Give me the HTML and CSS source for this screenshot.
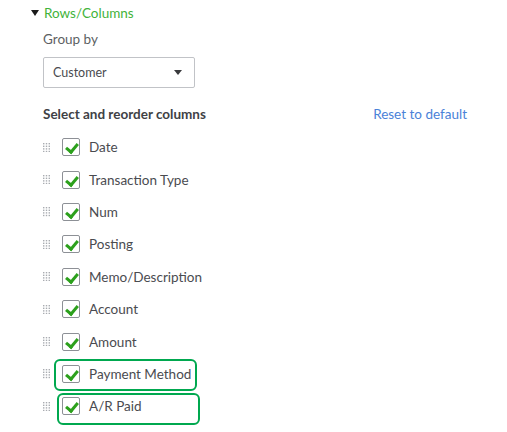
FILE: index.html
```html
<!DOCTYPE html>
<html lang="en">

<head>
    <meta charset="UTF-8">
    <meta name="viewport" content="width=device-width, initial-scale=1.0">
    <title>Rows/Columns</title>
    <link rel="stylesheet" href="styles.css">
</head>

<body>
    <svg class="defs" width="0" height="0">
        <defs>
            <g id="dots" fill="#a9acb1">
                <rect x="0" y="0" width="1.4" height="1.4" /><rect x="2.8" y="0" width="1.4" height="1.4" /><rect x="5.6" y="0" width="1.4" height="1.4" />
                <rect x="0" y="2.6" width="1.4" height="1.4" /><rect x="2.8" y="2.6" width="1.4" height="1.4" /><rect x="5.6" y="2.6" width="1.4" height="1.4" />
                <rect x="0" y="5.2" width="1.4" height="1.4" /><rect x="2.8" y="5.2" width="1.4" height="1.4" /><rect x="5.6" y="5.2" width="1.4" height="1.4" />
                <rect x="0" y="7.8" width="1.4" height="1.4" /><rect x="2.8" y="7.8" width="1.4" height="1.4" /><rect x="5.6" y="7.8" width="1.4" height="1.4" />
            </g>
        </defs>
    </svg>

    <div class="panel">
        <div class="section-title">
            <span class="caret"></span>
            <a href="javascript:">Rows/Columns</a>
        </div>

        <div class="section-body">
            <div class="field-label">Group by</div>
            <div class="select-box">
                <span>Customer</span>
                <span class="select-arrow"></span>
            </div>

            <div class="columns-head">
                <span class="columns-title">Select and reorder columns</span>
                <a href="javascript:" class="reset-link">Reset to default</a>
            </div>

            <ul class="column-list">
                <li class="column-row"><svg class="grip" viewBox="0 0 7 9.2"><use href="#dots" /></svg><span class="check"></span><span class="name">Date</span></li>
                <li class="column-row"><svg class="grip" viewBox="0 0 7 9.2"><use href="#dots" /></svg><span class="check"></span><span class="name">Transaction Type</span></li>
                <li class="column-row"><svg class="grip" viewBox="0 0 7 9.2"><use href="#dots" /></svg><span class="check"></span><span class="name">Num</span></li>
                <li class="column-row"><svg class="grip" viewBox="0 0 7 9.2"><use href="#dots" /></svg><span class="check"></span><span class="name">Posting</span></li>
                <li class="column-row"><svg class="grip" viewBox="0 0 7 9.2"><use href="#dots" /></svg><span class="check"></span><span class="name">Memo/Description</span></li>
                <li class="column-row"><svg class="grip" viewBox="0 0 7 9.2"><use href="#dots" /></svg><span class="check"></span><span class="name">Account</span></li>
                <li class="column-row"><svg class="grip" viewBox="0 0 7 9.2"><use href="#dots" /></svg><span class="check"></span><span class="name">Amount</span></li>
                <li class="column-row"><svg class="grip" viewBox="0 0 7 9.2"><use href="#dots" /></svg><span class="check"></span><span class="name">Payment Method</span>
                    <span class="mark mark-one"></span></li>
                <li class="column-row"><svg class="grip" viewBox="0 0 7 9.2"><use href="#dots" /></svg><span class="check"></span><span class="name">A/R Paid</span>
                    <span class="mark mark-two"></span></li>
            </ul>
        </div>
    </div>
</body>

</html>
```

FILE: styles.css
```css
* {
    padding: 0;
    margin: 0;
    box-sizing: border-box;
}

body {
    background: #ffffff;
    font-family: Lato, "Open Sans", sans-serif;
    font-size: 13px;
    color: #4a4b50;
}

a {
    text-decoration: none;
}

.defs {
    position: absolute;
}

.panel {
    padding: 5px 0 10px 31px;
}

.section-title {
    display: flex;
    align-items: center;
    height: 15px;
    font-size: 13.5px;
}

.section-title a {
    color: #3fb33a;
}

.caret {
    width: 0;
    height: 0;
    border-left: 4px solid transparent;
    border-right: 4px solid transparent;
    border-top: 6px solid #1b1b1b;
    margin-right: 5px;
}

.section-body {
    padding-left: 12px;
}

.field-label {
    margin-top: 10px;
    font-size: 13.5px;
    color: #5d5f63;
    line-height: 18px;
}

.select-box {
    display: flex;
    align-items: center;
    justify-content: space-between;
    width: 152px;
    height: 31px;
    margin-top: 9px;
    padding: 0 12px 0 9px;
    border: 1px solid #c1c3c7;
    border-radius: 2px;
    font-size: 12.5px;
    color: #4a4b50;
}

.select-arrow {
    width: 0;
    height: 0;
    border-left: 4px solid transparent;
    border-right: 4px solid transparent;
    border-top: 5px solid #393a3d;
}

.columns-head {
    display: flex;
    justify-content: space-between;
    align-items: center;
    width: 424px;
    margin-top: 18px;
    height: 16px;
}

.columns-title {
    font-weight: bold;
    font-size: 13.5px;
    color: #404145;
}

.reset-link {
    color: #4a82d8;
    font-size: 13.5px;
}

.column-list {
    list-style: none;
    margin-top: 9px;
}

.column-row {
    position: relative;
    display: flex;
    align-items: center;
    height: 32.4px;
}

.grip {
    width: 7px;
    height: 9.2px;
    margin-right: 12px;
}

.check {
    position: relative;
    width: 18px;
    height: 18px;
    border: 1px solid #8d9096;
    border-radius: 2px;
    margin-right: 9px;
}

.check::after {
    content: "";
    position: absolute;
    left: 5px;
    top: 2px;
    width: 5px;
    height: 9px;
    border-right: 3px solid #2ca01c;
    border-bottom: 3px solid #2ca01c;
    transform: rotate(40deg);
}

.name {
    font-size: 13.5px;
    color: #4a4b50;
}

/* 标注框 */
.mark {
    position: absolute;
    border: 2.5px solid #00a84f;
    border-radius: 6px;
}

.mark-one {
    left: 11px;
    top: 1px;
    width: 143px;
    height: 32px;
}

.mark-two {
    left: 14px;
    top: 3px;
    width: 143px;
    height: 32px;
}
```
